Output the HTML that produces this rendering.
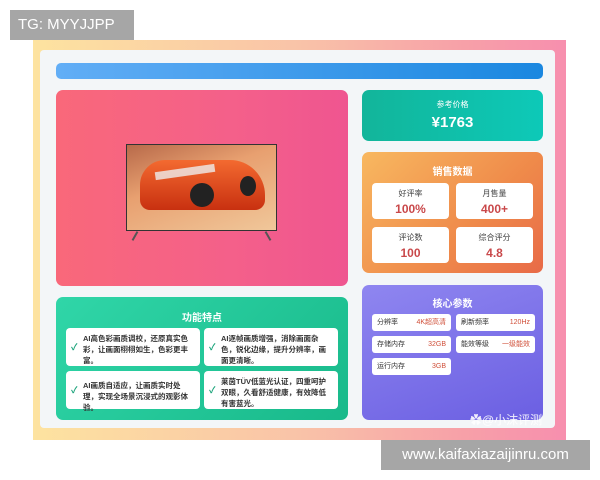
<!DOCTYPE html>
<html><head><meta charset="utf-8"><style>
*{margin:0;padding:0;box-sizing:border-box}
body{width:600px;height:480px;background:#fff;position:relative;overflow:hidden;font-family:"Liberation Sans","Noto Sans CJK SC",sans-serif}
.a{position:absolute}
.frame{left:33px;top:40px;width:533px;height:400px;background:linear-gradient(90deg,#fde3a0,#f9c3a8 50%,#f7a1a8 80%,#f78fae)}
.inner{left:40px;top:50px;width:515px;height:378px;background:#f3f6f8;border-radius:4px}
.card{border-radius:7px}
.cw{color:#fff;text-align:center}
.box{background:#fff;border-radius:4px;position:absolute;text-align:center}
.lbl{font-size:8px;color:#444;margin-top:5px}
.val{font-size:12px;font-weight:bold;color:#c9484a;margin-top:3px}
.feat{background:#fff;border-radius:4px;position:absolute;font-size:7.5px;line-height:11px;color:#333;padding:5px 8px 0 17px;font-weight:bold}
.feat:before{content:"✓";position:absolute;left:5px;top:14px;color:#1aa37a;font-size:9px}
.p{background:#fff;border-radius:3px;position:absolute;height:17px;font-size:7px;color:#333;line-height:17px;padding:0 5px}
.p b{float:right;color:#d0503a;font-weight:normal}
</style></head><body>
<div class="a frame"></div>
<div class="a inner"></div>
<div class="a" style="left:56px;top:63px;width:487px;height:16px;border-radius:5px;background:linear-gradient(90deg,#62aef6,#1a87e0)"></div>
<div class="a card" style="left:56px;top:90px;width:292px;height:196px;background:linear-gradient(90deg,#f9687a,#f4608a 60%,#ef5590)"></div>
<div class="a" style="left:126px;top:144px;width:151px;height:87px;background:linear-gradient(160deg,#b86a4a,#e8a070 40%,#f0c79a);border:1px solid #333"></div>
<div class="a" style="left:140px;top:160px;width:125px;height:50px;border-radius:25px 35px 10px 10px;background:linear-gradient(180deg,#f36a30,#c83010)"></div>
<div class="a" style="left:155px;top:168px;width:60px;height:8px;background:#eee;transform:rotate(-8deg);opacity:.8"></div>
<div class="a" style="left:190px;top:183px;width:24px;height:24px;border-radius:50%;background:#222"></div>
<div class="a" style="left:240px;top:176px;width:16px;height:20px;border-radius:50%;background:#222"></div>
<div class="a" style="left:134px;top:231px;width:2px;height:10px;background:#555;transform:rotate(30deg)"></div>
<div class="a" style="left:267px;top:231px;width:2px;height:10px;background:#555;transform:rotate(-30deg)"></div>
<div class="a card cw" style="left:362px;top:90px;width:181px;height:51px;background:linear-gradient(90deg,#12b59a,#0dc9b8)"><div style="font-size:8px;margin-top:9px">参考价格</div><div style="font-size:15px;font-weight:bold;margin-top:4px">¥1763</div></div>
<div class="a card cw" style="left:362px;top:152px;width:181px;height:121px;background:linear-gradient(135deg,#f8b860,#ef8a4a 60%,#e86a48)"><div style="font-size:10px;font-weight:bold;margin-top:11px">销售数据</div>
<div class="box" style="left:10px;top:31px;width:77px;height:36px"><div class="lbl">好评率</div><div class="val">100%</div></div>
<div class="box" style="left:94px;top:31px;width:77px;height:36px"><div class="lbl">月售量</div><div class="val">400+</div></div>
<div class="box" style="left:10px;top:75px;width:77px;height:36px"><div class="lbl">评论数</div><div class="val">100</div></div>
<div class="box" style="left:94px;top:75px;width:77px;height:36px"><div class="lbl">综合评分</div><div class="val">4.8</div></div></div>
<div class="a card cw" style="left:56px;top:297px;width:292px;height:123px;background:linear-gradient(135deg,#30d6a8,#18b98a)"><div style="font-size:10px;font-weight:bold;margin-top:12px">功能特点</div>
<div class="feat" style="left:10px;top:31px;width:134px;height:38px;text-align:left">AI高色彩画质调校，还原真实色彩，让画面栩栩如生，色彩更丰富。</div>
<div class="feat" style="left:148px;top:31px;width:134px;height:38px;text-align:left">AI逐帧画质增强，消除画面杂色，锐化边缘，提升分辨率，画面更清晰。</div>
<div class="feat" style="left:10px;top:74px;width:134px;height:38px;text-align:left;padding-top:9px">AI画质自适应，让画质实时处理，实现全场景沉浸式的观影体验。</div>
<div class="feat" style="left:148px;top:74px;width:134px;height:38px;text-align:left">莱茵TÜV低蓝光认证，四重呵护双眼，久看舒适健康，有效降低有害蓝光。</div></div>
<div class="a card cw" style="left:362px;top:285px;width:181px;height:135px;background:linear-gradient(160deg,#8f86f0,#6b5fe2)"><div style="font-size:10px;font-weight:bold;margin-top:10px">核心参数</div>
<div class="p" style="left:10px;top:29px;width:79px;text-align:left">分辨率<b>4K超高清</b></div>
<div class="p" style="left:94px;top:29px;width:79px;text-align:left">刷新频率<b>120Hz</b></div>
<div class="p" style="left:10px;top:51px;width:79px;text-align:left">存储内存<b>32GB</b></div>
<div class="p" style="left:94px;top:51px;width:79px;text-align:left">能效等级<b>一级能效</b></div>
<div class="p" style="left:10px;top:73px;width:79px;text-align:left">运行内存<b>3GB</b></div></div>
<div class="a" style="left:470px;top:411px;font-size:12px;color:#fff;opacity:.9">✿@小沫评测</div>
<div class="a" style="left:10px;top:10px;width:124px;height:30px;background:#a6a6a6;color:#fff;font-size:15px;line-height:30px;padding-left:8px">TG: MYYJJPP</div>
<div class="a" style="left:381px;top:440px;width:209px;height:30px;background:#a6a6a6;color:#fff;font-size:15px;line-height:30px;text-align:center">www.kaifaxiazaijinru.com</div>
</body></html>
